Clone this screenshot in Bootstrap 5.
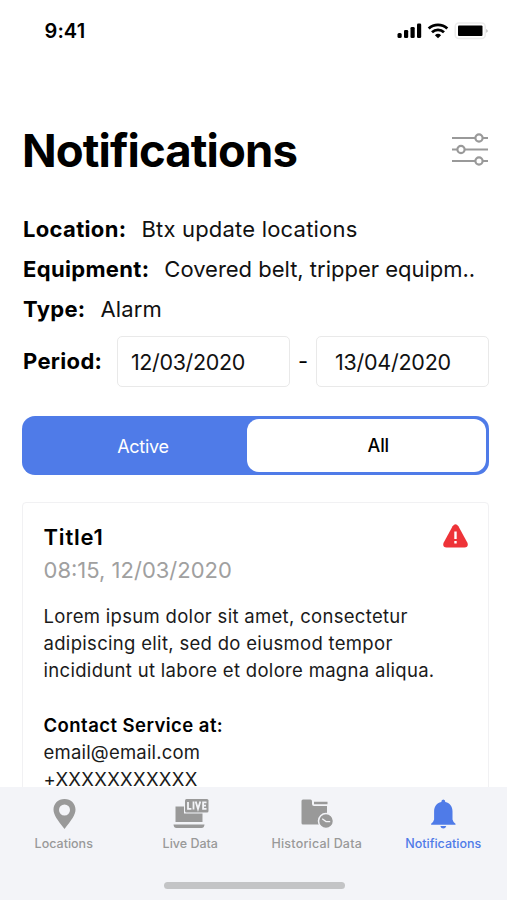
<!DOCTYPE html>
<html lang="en">
<head>
<meta charset="utf-8">
<meta name="viewport" content="width=device-width, initial-scale=1">
<title>Notifications</title>
<link href="https://cdn.jsdelivr.net/npm/bootstrap@5.3.0/dist/css/bootstrap.min.css" rel="stylesheet">
<style>
body{font-family:Inter,"Liberation Sans",sans-serif;color:#000;background:#fff}
svg{display:block}
.screen{height:900px}
.content{min-height:0}
.status{height:62px;padding:0 19px 0 44.5px}
.clock{font-size:20px;font-weight:600;line-height:24px;letter-spacing:.1px}
.heading{height:56px;margin-top:60px;padding:0 19px 0 22px}
.heading h1{font-size:45.5px;font-weight:700;line-height:56px;letter-spacing:-.9px;padding-top:1px}
.filters{padding:30.5px 18px 0 23px;font-size:22px}
.filters b{font-weight:700;letter-spacing:.33px}
.line{height:40.3px;line-height:40px;gap:15px}
.val{letter-spacing:.1px;color:#111}
.val.place{letter-spacing:.2px}
.val.gear{letter-spacing:-.01px}
.period{height:52px;margin-top:6.5px}
.date{width:173px;height:51px;border:1.5px solid #e9e9e9;border-radius:5px;padding-left:13px;line-height:51px;font-size:21.5px;letter-spacing:-.35px;color:#111}
.date.second{padding-left:18px;letter-spacing:-.25px}
.switch{height:59px;margin:28px 18.5px 0 22px;background:#4f7be8;border-radius:13px;padding:3px;font-size:18px}
.switch .opt{border-radius:12px}
.switch .left{width:222px;padding-left:14px;padding-top:2px;letter-spacing:-.25px}
.switch .right{font-weight:500;padding-left:24px;letter-spacing:-.1px}
.notice{margin:27px 18px 0 22px;border:1.5px solid #f1f1f3;border-radius:4px;height:400px;padding:19px 20px 0 20.5px}
.notice h2{font-size:22px;font-weight:600;line-height:30px;letter-spacing:.8px}
.time{font-size:22px;line-height:30px;color:#a0a0a0;margin-top:3px}
.copy{font-size:18.5px;line-height:27.2px;margin-top:18px;color:#1a1a1a;letter-spacing:.31px}
.copy b{font-weight:600;color:#000;letter-spacing:.45px}
.copy .mail{letter-spacing:.2px}
.tabs{height:113px;background:#f3f4f8}
.tab{width:126.5px;padding-top:9px;color:#999;font-size:12.5px;font-weight:500;line-height:16px;text-decoration:none}
.tab svg{margin-bottom:6px}
.tab span{padding-left:1px}
.tab .wide{letter-spacing:.2px}
.tab.on{color:#4f7be8}
.home{width:181px;height:7px;background:#c3c4c6;border-radius:4px;margin:0 auto 11px;transform:translateX(1px)}
</style>
<script src="https://cdn.jsdelivr.net/npm/bootstrap@5.3.0/dist/js/bootstrap.bundle.min.js"></script>
</head>
<body>
<div class="screen overflow-hidden d-flex flex-column">
  <main class="content flex-grow-1 overflow-hidden">
    <div class="status d-flex align-items-center justify-content-between">
      <span class="clock">9:41</span>
      <svg width="92" height="20" viewBox="396 21 92 20">
        <g fill="#000"><rect x="397.5" y="33" width="4.2" height="5" rx="1.5"/><rect x="404" y="30" width="4.2" height="8" rx="1.3"/><rect x="410.5" y="27" width="4.2" height="11" rx="1.3"/><rect x="417" y="23.5" width="4.2" height="14.5" rx="1.3"/></g>
        <g fill="none" stroke="#000" stroke-width="2.8"><path d="M428.700 28.600a13.500 13.500 0 0 1 18.600 0"/><path d="M432 32.300a8.700 8.700 0 0 1 12 0"/></g>
        <path d="M434.900 35.200a4.600 4.600 0 0 1 6.200 0L438 38.200z"/>
        <rect x="455.2" y="23" width="30" height="15.6" rx="3.5" fill="#fff" stroke="#ececec" stroke-width="1.5"/>
        <rect x="458" y="25.500" width="24.500" height="10.500" rx="1"/><path d="M486.500 29v3.800q2-1.900 0-3.800" fill="#999"/>
      </svg>
    </div>
    <div class="heading d-flex align-items-center justify-content-between">
      <h1 class="m-0">Notifications</h1>
      <svg width="36" height="34" viewBox="0 0 36 34" fill="none" stroke="#999" stroke-width="2.2">
        <path d="M0 5h23M31 5h5M0 16.500h5M13 16.500h23M0 28h23M31 28h5"/>
        <circle cx="27" cy="5" r="3.600"/><circle cx="9" cy="16.500" r="3.600"/><circle cx="27" cy="28" r="3.600"/>
      </svg>
    </div>
    <section class="filters">
      <div class="line d-flex"><b>Location:</b><span class="val place">Btx update locations</span></div>
      <div class="line d-flex"><b>Equipment:</b><span class="val gear text-nowrap">Covered belt, tripper equipm..</span></div>
      <div class="line d-flex"><b>Type:</b><span class="val">Alarm</span></div>
      <div class="period d-flex align-items-center justify-content-between"><b>Period:</b>
        <div class="d-flex align-items-center"><div class="date">12/03/2020</div><span class="px-2">-</span><div class="date second">13/04/2020</div></div>
      </div>
    </section>
    <div class="switch d-flex">
      <div class="opt left d-flex align-items-center justify-content-center text-white">Active</div>
      <div class="opt right bg-white flex-grow-1 d-flex align-items-center justify-content-center">All</div>
    </div>
    <article class="notice">
      <div class="d-flex justify-content-between">
        <h2 class="m-0">Title1</h2>
        <svg width="25" height="27" viewBox="0 -2 25 27"><path d="M9.600 2.300q2.900-4 5.800 0l9 16.400q1.500 4.300-2.900 4.800h-18q-4.400-.5-2.900-4.800z" fill="#ee3338"/><path d="M12.500 7.500v7.500M12.500 17v2.500" stroke="#fff" stroke-width="2.400"/></svg>
      </div>
      <div class="time">08:15, 12/03/2020</div>
      <div class="copy text-nowrap">Lorem ipsum dolor sit amet, consectetur<br>adipiscing elit, sed do eiusmod tempor<br>incididunt ut labore et dolore magna aliqua.<br><br><b>Contact Service at:</b><br><span class="mail">email@email.com</span><br><span>+XXXXXXXXXXX</span></div>
    </article>
  </main>
  <nav class="tabs flex-shrink-0 d-flex flex-column">
    <div class="d-flex flex-grow-1">
      <a class="tab d-flex flex-column align-items-center"><svg width="40" height="34" viewBox="-1 0 40 34"><path fill-rule="evenodd" d="M20.500 3C14 3 9.500 7.700 9.500 13.500c0 5.500 4 10.500 11 19.500 7-9 11-14 11-19.500C31.500 7.700 27 3 20.500 3zm0 5.500a5.500 5.500 0 1 1 0 11 5.500 5.500 0 0 1 0-11z" fill="#999"/></svg><span>Locations</span></a>
      <a class="tab d-flex flex-column align-items-center"><svg width="40" height="34" viewBox="0 0 40 34"><g fill="#999"><path d="M5.500 10.500h8.500v7h18.500v8.500h-27zM3.500 28.500h31q-.3 3.500-3 3.500h-25q-2.700 0-3-3.500z"/><rect x="15" y="3" width="23.500" height="13.500" rx="1.500"/></g><path d="M18 6v6.800h3.400M23.500 5.500v8M25.700 5.500l2.300 7.500 2.300-7.500M36.500 6.300h-3.400v6.500h3.400M33 9.600h3" fill="none" stroke="#f3f4f8" stroke-width="1.800"/></svg><span>Live Data</span></a>
      <a class="tab d-flex flex-column align-items-center"><svg width="40" height="34" viewBox="-1 0 40 34"><path d="M4.500 5q0-1.500 1.500-1.500h7.500q1.500 0 1.500 2v2.500q0 2 2 2h13v18.500h-24q-1.500 0-1.500-1.500z" fill="#999"/><path d="M17 7h13.500" stroke="#999" stroke-width="2.500"/><circle cx="29" cy="25" r="7.500" fill="#999" stroke="#f3f4f8" stroke-width="1.500"/><path d="M25.200 22.800l3.800 2.800h4.200" fill="none" stroke="#f3f4f8" stroke-width="1.300"/></svg><span class="wide">Historical Data</span></a>
      <a class="tab on d-flex flex-column align-items-center"><svg width="40" height="34" viewBox="0 0 40 34"><path d="M20.300 3.500q2 0 2 2.500c5 1.300 7.200 4.600 7.200 9.500v8q.3 2 3 4.300v1H8.100v-1q2.700-2.300 3-4.300v-8c0-4.900 2.200-8.200 7.200-9.500q0-2.500 2-2.500zM17.300 30h6q-.8 2.500-3 2.500t-3-2.500z" fill="#4f7be8"/></svg><span>Notifications</span></a>
    </div>
    <div class="home"></div>
  </nav>
</div>
</body>
</html>
